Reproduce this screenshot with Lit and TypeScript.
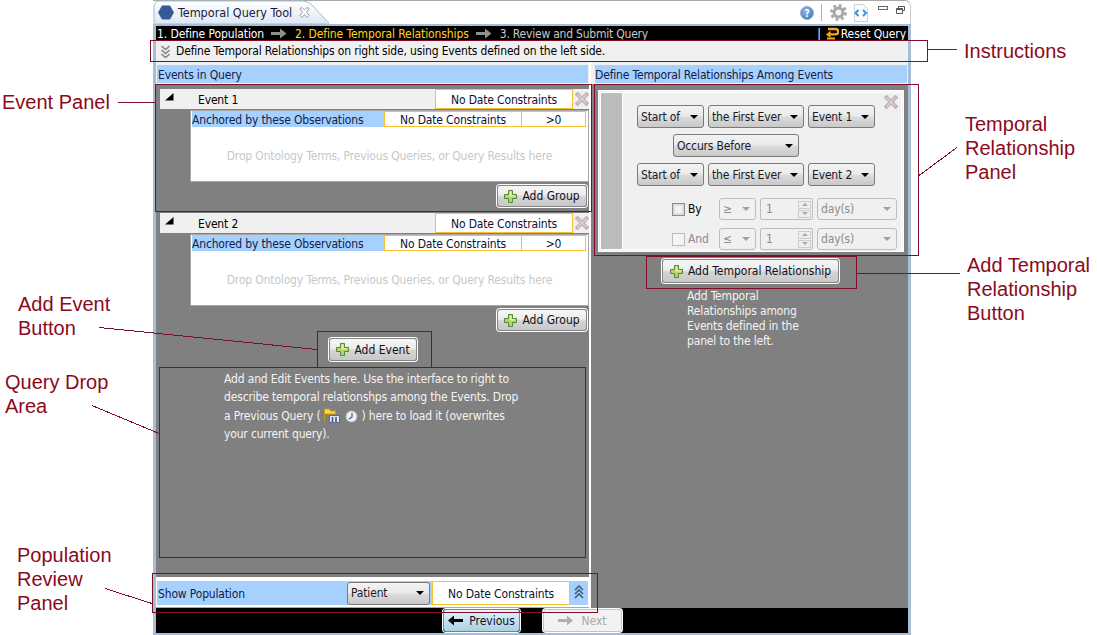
import { LitElement, html, css, svg } from "lit";
import { customElement } from "lit/decorators.js";

const plus = html`<svg class="ic" width="13" height="13" viewBox="0 0 13 13"><path d="M4.500 .5h4v4h4v4h-4v4h-4v-4h-4v-4h4z" fill="#b7d36a" stroke="#4f8a3a" stroke-width="1"/><path d="M5.500 1.500h2v3.500h3.500v1.500H5.500z" fill="#e6f0a8"/></svg>`;
const cross = html`<svg class="x" width="14" height="14" viewBox="0 0 14 14"><path d="M2.500 2.500l9 9M11.500 2.500l-9 9" stroke="#c4b0b0" stroke-width="4" stroke-linecap="square"/><path d="M2.500 2.500l9 9M11.500 2.500l-9 9" stroke="#dcd4d4" stroke-width="1.400"/></svg>`;
const tri = html`<svg class="tri" width="9" height="8" viewBox="0 0 9 8"><path d="M0 7.500L8.500 7.500V0z" fill="#000"/></svg>`;
const arrowGray = html`<svg width="16" height="11" viewBox="0 0 16 11"><path d="M0 4h9V0.500L15.500 5.500 9 10.500V7H0z" fill="#8f8f8f"/></svg>`;
const chevrons = (c: string) => html`<svg width="9" height="13" viewBox="0 0 9 13"><path d="M0.500 1l4 3.500 4-3.500M0.500 5l4 3.500 4-3.500M0.500 9l4 3.500 4-3.500" fill="none" stroke="${c}" stroke-width="1.600"/></svg>`;
const chevronsUp = html`<svg width="10" height="14" viewBox="0 0 10 14"><path d="M1 5l4-4 4 4M1 9l4-4 4 4M1 13l4-4 4 4" fill="none" stroke="#3f5f78" stroke-width="1.600"/></svg>`;

const annoRects = [
  [150, 40, 777, 21],
  [155, 84, 436, 127],
  [594, 84, 324, 171],
  [646, 256, 210, 32],
  [317, 331, 114, 36],
  [159, 367, 426, 190],
  [152, 573, 445, 39],
];
const annoLines = [
  [927, 49, 957, 49],
  [118, 102, 155, 102],
  [919, 175, 957, 147],
  [856, 273, 960, 273],
  [99, 327, 317, 349],
  [92, 405, 159, 433],
  [105, 588, 152, 603],
];
const labels = [
  { t: "Instructions", x: 964, y: 39 },
  { t: "Event Panel", x: 2, y: 90 },
  { t: "Temporal", x: 965, y: 112 },
  { t: "Relationship", x: 965, y: 136 },
  { t: "Panel", x: 965, y: 160 },
  { t: "Add Temporal", x: 967, y: 253 },
  { t: "Relationship", x: 967, y: 277 },
  { t: "Button", x: 967, y: 301 },
  { t: "Add Event", x: 18, y: 292 },
  { t: "Button", x: 18, y: 316 },
  { t: "Query Drop", x: 5, y: 370 },
  { t: "Area", x: 5, y: 394 },
  { t: "Population", x: 17, y: 543 },
  { t: "Review", x: 17, y: 567 },
  { t: "Panel", x: 17, y: 591 },
];

@customElement("app-root")
export class AppRoot extends LitElement {
  static styles = css`
    :host {
      display: block;
      position: relative;
      width: 1097px;
      height: 635px;
      background: #fff;
      overflow: hidden;
      font-family: "DejaVu Sans Condensed", "DejaVu Sans", sans-serif;
      font-stretch: condensed;
      font-size: 12px;
      letter-spacing: -0.16px;
      color: #000;
    }
    .win { margin-left: 153px; width: 758px; height: 635px; display: flex; flex-direction: column; }
    .tabbar {
      height: 24px; flex: none; display: flex; align-items: center; position: relative;
      border-top: 1px solid #a8a8a8; border-radius: 0 6px 0 0; box-sizing: border-box;
      background: #fff; border-right: 1px solid #ccc;
    }
    .tabshape { position: absolute; left: 0; top: -1px; }
    .tab { position: relative; display: flex; align-items: center; height: 23px; padding-left: 5px; width: 170px; font-size: 12.500px; letter-spacing: 0; color: #1a1a3a; }
    .tab .name { margin-left: 4px; }
    .tab .close { margin-left: 7px; display: flex; }
    .tools { margin-left: auto; display: flex; align-items: center; padding-right: 5px; height: 23px; }
    .tools svg { display: block; }
    .sep { width: 1px; height: 17px; background: #b0b0b0; margin: 0 8px 0 7px; }
    .body { flex: 1; display: flex; flex-direction: column; border: solid #a7bdd6; border-width: 2px 3px; min-height: 0; }
    .steps { height: 15px; flex: none; background: #000; display: flex; align-items: center; padding-left: 1px; white-space: nowrap; color: #fff; letter-spacing: -0.1px; }
    .steps svg { margin: 0 8px 0 7px; flex: none; }
    .y { color: #ffd21f; }
    .g { color: #c8c8c8; letter-spacing: -0.22px; }
    .reset { margin-left: auto; display: flex; align-items: center; padding-right: 2px; }
    .reset svg { margin: -1px 2px 0 4px; }
    .instr { height: 20px; flex: none; background: #f0f0f0; display: flex; align-items: center; padding-left: 5px; gap: 6px; }
    .cols { height: 547px; flex: none; display: flex; background: #f0f0f0; border-top: 1px solid #d8d8d8; box-sizing: border-box; }
    .left { width: 433px; flex: none; display: flex; flex-direction: column; }
    .sash { width: 2px; background: #fff; flex: none; }
    .right { width: 317px; flex: none; display: flex; flex-direction: column; }
    .hd { height: 17px; padding-top: 1px; flex: none; margin-top: 3px; margin-bottom: 1px; background: #a6d1ff; display: flex; align-items: center; color: #10204a; white-space: nowrap; }
    .left .hd { margin-left: 1px; margin-right: 1px; padding-left: 1px; }
    .right .hd { margin-left: 4px; margin-right: 1px; }
    .gray { background: #808080; flex: 1; display: flex; flex-direction: column; min-height: 0; }
    .events { padding-top: 5px; }
    .evhead { margin-left: 4px; height: 20px; background: #f0f0f0; display: flex; align-items: center; }
    .tri { margin-left: 5px; margin-top: -4px; flex: none; }
    .evname { margin-left: 24px; width: 237px; padding-top: 1px; }
    .date { background: #fff; border: 1px solid #fbc02d; box-sizing: border-box; display: flex; align-items: center; justify-content: center; width: 138px; height: 100%; padding-top: 1px; color: #10103a; white-space: nowrap; }
    .x { margin-left: 2px; display: block; flex: none; }
    .gbox { margin: 1px 0 0 34px; height: 72px; background: #fff; border: 1px solid #a8a8a8; box-sizing: border-box; display: flex; flex-direction: column; padding: 0 1px 0 1px; }
    .grow { height: 16px; display: flex; flex: none; }
    .blue { width: 192px; background: #a6d1ff; display: flex; align-items: center; padding-top: 1px; box-sizing: border-box; white-space: nowrap; color: #10204a; }
    .grow .date { width: 138px; }
    .grow .date.n { width: 65px; margin-left: -1px; }
    .ph { flex: 1; display: flex; align-items: center; justify-content: center; color: #c8c8c8; padding-top: 3px; white-space: nowrap; }
    .btn {
      display: flex; align-items: center; justify-content: center; gap: 5px; box-sizing: border-box;
      border: 1px solid #858585; border-radius: 3px; box-shadow: 0 0 0 1px #fff; letter-spacing: 0;
      background: linear-gradient(#f6f6f6 0, #ececec 45%, #d4d4d4 55%, #c8c8c8 100%);
      color: #101020; white-space: nowrap; flex: none;
    }
    .ic { display: block; flex: none; }
    .addg { width: 90px; height: 22px; margin: 3px 2px 0 auto; }
    .ev2 { margin-top: 6px; }
    .adde { width: 88px; height: 23px; margin: 7px 0 0 173px; }
    .msg { margin: 9px 0 0 68px; width: 320px; line-height: 18.300px; color: #f4f4f4; white-space: nowrap; }
    .msg svg { vertical-align: -3px; }
    .popwrap { height: 31px; flex: none; box-sizing: border-box; background: #fff; padding: 3px 1px 2px 1px; border-bottom: 1px solid #a8a8a8; }
    .pop { height: 24px; display: flex; align-items: center; background: #a6d1ff; color: #10204a; margin-top: 1px; }
    .popl { width: 189px; padding-left: 1px; padding-top: 1px; }
    .popsel { width: 83px; height: 100%; padding-top: 1px; }
    .pop .date { margin-left: 2px; }
    .chev { margin-left: 4px; margin-top: -2px; display: flex; }
    .sel {
      box-sizing: border-box; display: flex; align-items: center; justify-content: space-between;
      border: 1px solid #7a7a7a; border-radius: 3px; padding: 0 5px 0 3px; flex: none; height: 23px;
      background: linear-gradient(#f2f2f2 0, #ebebeb 45%, #dadada 55%, #c9c9c9 100%); color: #1a1a2a; white-space: nowrap;
    }
    .sel::after { content: ""; border: solid transparent; border-width: 4px 4px 0; border-top-color: #000; }
    .sel.dis { border-color: #bdbdbd; background: #f0f0f0; color: #8c8c8c; height: 22px; }
    .sel.dis::after { border-top-color: #a0a0a0; }
    .card { margin: 6px 0 0 7px; width: 306px; height: 162px; box-sizing: border-box; background: #f0f0f0; border: 1px solid #fff; padding: 1px; flex: none; position: relative; }
    .inner { height: 100%; box-sizing: border-box; border: 1px solid #fff; display: flex; }
    .strip { width: 21px; background: #bcbcbc; border-right: 1px solid #fff; flex: none; }
    .cfg { flex: 1; display: flex; flex-direction: column; padding: 12px 0 0 14px; }
    .crow { display: flex; gap: 4px; flex: none; }
    .occ { margin: 6px 0 6px 36px; }
    .lim { align-items: center; margin-top: 12px; margin-left: 35px; }
    .lim2 { margin-top: 8px; }
    .chk { width: 13px; height: 13px; box-sizing: border-box; border: 1px solid #8a8a8a; background: #f4f4f4; box-shadow: inset 0 0 0 2px #ddd; flex: none; }
    .chk.dis { border-color: #bbb; box-shadow: none; }
    .lbl { width: 27px; margin-left: -1px; flex: none; }
    .lbl.dis { color: #8c8c8c; }
    .spin { width: 53px; height: 22px; box-sizing: border-box; border: 1px solid #bdbdbd; border-radius: 2px; display: flex; align-items: center; padding-left: 5px; color: #8c8c8c; justify-content: space-between; padding-right: 1px; }
    .spinb { display: flex; flex-direction: column; gap: 1px; }
    .spinb i { width: 13px; height: 8px; border: 1px solid #ccc; box-sizing: border-box; display: flex; align-items: center; justify-content: center; background: #eee; }
    .spinb i::after { content: ""; border: solid transparent; border-width: 0 3px 3px; border-bottom-color: #a8a8a8; }
    .spinb i.d::after { border-width: 3px 3px 0; border-color: #a8a8a8 transparent transparent; }
    .cardx { position: absolute; right: 5px; top: 4px; }
    .addt { width: 177px; height: 24px; margin: 7px 0 0 71px; }
    .note { margin: 6px 0 0 96px; width: 120px; line-height: 15px; color: #f4f4f4; }
    .foot { height: 25px; flex: none; background: #000; display: flex; align-items: center; padding-left: 287px; }
    .foot .btn { height: 23px; gap: 6px; }
    .prev { width: 77px; border-color: #2f9ccf; background: linear-gradient(#e6f3fb, #c2dfef 55%, #abd0e4); box-shadow: 0 0 0 1px #fff; }
    .next { width: 79px; margin-left: 23px; background: #f2f2f2; border-color: #c4c4c4; color: #a8a8a8; box-shadow: 0 0 0 1px #fff; }
    .foot .next { gap: 8px; }
    .over { position: absolute; left: 0; top: 0; pointer-events: none; }
    .note-label { position: absolute; color: #8b0a20; font-family: "Liberation Sans", sans-serif; font-size: 20px; letter-spacing: 0; line-height: 24px; white-space: nowrap; }
  `;

  private ev(name: string, cls = "") {
    return html`<div class=${cls}>
      <div class="evhead">${tri}<span class="evname">${name}</span><div class="date">No Date Constraints</div>${cross}</div>
      <div class="gbox">
        <div class="grow"><div class="blue">Anchored by these Observations</div><div class="date">No Date Constraints</div><div class="date n">&gt;0</div></div>
        <div class="ph">Drop Ontology Terms, Previous Queries, or Query Results here</div>
      </div>
      <div class="btn addg">${plus}Add Group</div>
    </div>`;
  }

  private sel(text: string, w: number, dis = false) {
    return html`<div class="sel ${dis ? "dis" : ""}" style="width:${w}px">${text}</div>`;
  }

  private relRow(ev: string) {
    return html`<div class="crow">${this.sel("Start of", 67)}${this.sel("the First Ever", 96)}${this.sel(ev, 67)}</div>`;
  }

  private limRow(sym: string, name: string, dis: boolean, extra: string) {
    return html`<div class="crow lim ${extra}">
      <div class="chk ${dis ? "dis" : ""}"></div><span class="lbl ${dis ? "dis" : ""}">${name}</span>
      ${this.sel(sym, 37, true)}
      <div class="spin">1<div class="spinb"><i></i><i class="d"></i></div></div>
      ${this.sel("day(s)", 80, true)}
    </div>`;
  }

  render() {
    return html`
      <div class="win">
        <div class="tabbar">
          <svg class="tabshape" width="176" height="24" viewBox="0 0 176 24"><defs><linearGradient id="tg" x1="0" y1="0" x2="0" y2="1"><stop offset="0" stop-color="#fff"/><stop offset="1" stop-color="#dce8f5"/></linearGradient></defs><path d="M1 24V7Q1 1 7 1H150Q156 1 161 7L172 19Q175 23 178 24Z" fill="url(#tg)" stroke="#a8bcd2"/></svg>
          <div class="tab">
            <svg width="16" height="15" viewBox="0 0 16 15"><path d="M4 0.500h8l4 7-4 7H4l-4-7z" fill="#345b96"/></svg>
            <span class="name">Temporal Query Tool</span>
            <span class="close"><svg width="11" height="11" viewBox="0 0 11 11"><path d="M1 1.500l2-1L5.500 3 8 .500l2 1L7.500 5.500 10 8.500l-2 2L5.500 7.500 3 10.500l-2-2L3.500 5.500z" fill="#fff" stroke="#9a9a9a"/></svg></span>
          </div>
          <div class="tools">
            <svg width="14" height="14" viewBox="0 0 14 14"><defs><radialGradient id="hp" cx="0.4" cy="0.35" r="0.7"><stop offset="0" stop-color="#8fb8e6"/><stop offset="1" stop-color="#3e78c0"/></radialGradient></defs><circle cx="7" cy="7" r="6.500" fill="url(#hp)" stroke="#9fb0c4"/><text x="7" y="10.500" font-size="10" font-weight="700" text-anchor="middle" fill="#fff">?</text></svg>
            <div class="sep"></div>
            <svg width="17" height="17" viewBox="0 0 17 17"><circle cx="8.500" cy="8.500" r="4.500" fill="#f4f4f4" stroke="#a8a8a8" stroke-width="3"/><circle cx="8.500" cy="8.500" r="7" fill="none" stroke="#a8a8a8" stroke-width="3" stroke-dasharray="2.800 2.700"/></svg>
            <svg style="margin-left:7px" width="14" height="18" viewBox="0 0 14 18"><path d="M0.500 0.500h9l4 4v13H.5z" fill="#fbfbfb" stroke="#d0d0d0"/><path d="M4.500 6L1.500 9l3 3M9 6l3 3-3 3" fill="none" stroke="#3f95e0" stroke-width="2"/></svg>
            <svg style="margin-left:10px;margin-top:-8px" width="10" height="5" viewBox="0 0 10 5"><rect x="0.500" y="0.500" width="9" height="3" fill="#fff" stroke="#666"/></svg>
            <svg style="margin-left:8px;margin-top:-6px" width="9" height="8" viewBox="0 0 9 8"><path d="M2.500 2V.5h6v4H7M.5 2.500h6v5h-6zM.5 3.500h6" fill="#fff" stroke="#555"/></svg>
          </div>
        </div>
        <div class="body">
          <div class="steps">
            <span>1. Define Population</span>${arrowGray}<span class="y">2. Define Temporal Relationships</span>${arrowGray}<span class="g">3. Review and Submit Query</span>
            <div class="reset"><span>|</span>
              <svg width="14" height="13" viewBox="0 0 14 13"><path d="M3 2h7.500a2.700 2.700 0 0 1 0 5.400H4.500" fill="none" stroke="#f5a71c" stroke-width="2.400"/><path d="M5.500 3.700L1 7.400l4.500 3.700z" fill="#f5a71c"/><path d="M2 11.500h8" stroke="#f5a71c" stroke-width="2"/></svg>
              <span>Reset Query</span></div>
          </div>
          <div class="instr">${chevrons("#8a8a8a")}<span>Define Temporal Relationships on right side, using Events defined on the left side.</span></div>
          <div class="cols">
            <div class="left">
              <div class="hd">Events in Query</div>
              <div class="gray events">
                ${this.ev("Event 1")}
                ${this.ev("Event 2", "ev2")}
                <div class="btn adde">${plus}Add Event</div>
                <div class="msg">Add and Edit Events here. Use the interface to right to<br>describe temporal relationshps among the Events. Drop<br>a Previous Query (
                  <svg width="16" height="15" viewBox="0 0 16 15"><path d="M.5 14V1h5l1 2h5v3H.5" fill="#ffd83a" stroke="#c89a10"/><rect x="5.500" y="7.500" width="10" height="7" fill="#dfe7f5" stroke="#5a6a9a"/><path d="M8.500 9v5M12 9v5" stroke="#3a4a8a" stroke-width="1.500"/></svg>
                  <svg style="margin-left:2px" width="13" height="13" viewBox="0 0 13 13"><circle cx="6.500" cy="6.500" r="5.500" fill="#eef0f6" stroke="#b8b8b8"/><path d="M7 3v4L4 9" fill="none" stroke="#44558a" stroke-width="1.200"/></svg>
                  ) here to load it (overwrites<br>your current query).</div>
              </div>
              <div class="popwrap"><div class="pop">
                <span class="popl">Show Population</span>
                <div class="sel popsel">Patient</div>
                <div class="date">No Date Constraints</div>
                <span class="chev">${chevronsUp}</span>
              </div></div>
            </div>
            <div class="sash"></div>
            <div class="right">
              <div class="hd">Define Temporal Relationships Among Events</div>
              <div class="gray">
                <div class="card">
                  <div class="inner">
                    <div class="strip"></div>
                    <div class="cfg">
                      ${this.relRow("Event 1")}
                      <div class="crow occ">${this.sel("Occurs Before", 126)}</div>
                      ${this.relRow("Event 2")}
                      ${this.limRow("≥", "By", false, "")}
                      ${this.limRow("≤", "And", true, "lim2")}
                    </div>
                  </div>
                  <span class="cardx">${cross}</span>
                </div>
                <div class="btn addt">${plus}Add Temporal Relationship</div>
                <div class="note">Add Temporal Relationships among Events defined in the panel to the left.</div>
              </div>
            </div>
          </div>
          <div class="foot">
            <div class="btn prev"><svg width="15" height="11" viewBox="0 0 15 11"><path d="M15 4H6V.5L0 5.500 6 10.500V7h9z" fill="#000"/></svg>Previous</div>
            <div class="btn next"><svg width="15" height="11" viewBox="0 0 15 11"><path d="M0 4h9V.5l6 5-6 5V7H0z" fill="#b0b0b0"/></svg>Next</div>
          </div>
        </div>
      </div>
      <svg class="over" width="1097" height="635" shape-rendering="crispEdges">
        ${annoRects.map(([x, y, w, h]) => svg`<rect x=${x + 0.5} y=${y + 0.5} width=${w} height=${h} fill="none" stroke="#7f0f26"/>`)}
        ${annoLines.map(([a, b, c, d]) => svg`<line x1=${a} y1=${b + 0.5} x2=${c} y2=${d + 0.5} stroke="#7f0f26"/>`)}
      </svg>
      ${labels.map((l) => html`<span class="note-label" style="left:${l.x}px;top:${l.y}px">${l.t}</span>`)}
    `;
  }
}
